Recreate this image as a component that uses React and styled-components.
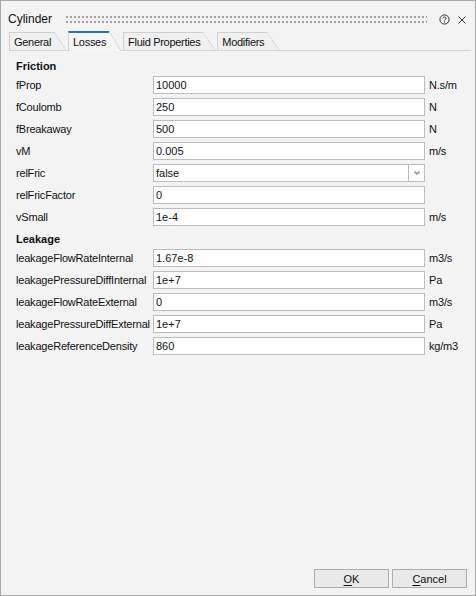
import React from "react";
import styled, { createGlobalStyle } from "styled-components";

const GlobalStyle = createGlobalStyle`
  html, body {
    margin: 0;
    padding: 0;
    background: #f3f3f3;
  }
  * {
    box-sizing: border-box;
  }
`;

const friction = [
  { label: "fProp", value: "10000", unit: "N.s/m" },
  { label: "fCoulomb", value: "250", unit: "N" },
  { label: "fBreakaway", value: "500", unit: "N" },
  { label: "vM", value: "0.005", unit: "m/s" },
  { label: "relFric", value: "false", select: true },
  { label: "relFricFactor", value: "0" },
  { label: "vSmall", value: "1e-4", unit: "m/s" },
];

const leakage = [
  { label: "leakageFlowRateInternal", value: "1.67e-8", unit: "m3/s" },
  { label: "leakagePressureDiffInternal", value: "1e+7", unit: "Pa" },
  { label: "leakageFlowRateExternal", value: "0", unit: "m3/s" },
  { label: "leakagePressureDiffExternal", value: "1e+7", unit: "Pa" },
  { label: "leakageReferenceDensity", value: "860", unit: "kg/m3" },
];

const tabs = ["General", "Losses", "Fluid Properties", "Modifiers"];

function renderRows(rows) {
  return rows.map((row) => (
    <Row key={row.label}>
      <Label>{row.label}</Label>
      {row.select ? (
        <Select>
          <SelectValue>{row.value}</SelectValue>
          <SelectButton>
            <svg width="8" height="6" viewBox="0 0 8 6">
              <path d="M1.5 1.5 L4 4 L6.5 1.5" stroke="#8a8a8a" strokeWidth="1.4" fill="none" />
            </svg>
          </SelectButton>
        </Select>
      ) : (
        <Field>{row.value}</Field>
      )}
      <Unit>{row.unit}</Unit>
    </Row>
  ));
}

const App = () => {
  return (
    <Window>
      <GlobalStyle />
      <TitleBar>
        <Title>Cylinder</Title>
        <Grip>
          <svg width="100%" height="7">
            <defs>
              <pattern id="grip" width="4" height="5" patternUnits="userSpaceOnUse">
                <rect x="0" y="0" width="2" height="2" fill="#a3a3a3" />
              </pattern>
            </defs>
            <rect x="0" y="0" width="100%" height="7" fill="url(#grip)" />
          </svg>
        </Grip>
        <TitleIcons>
          <svg width="11" height="11" viewBox="0 0 11 11">
            <circle cx="5.5" cy="5.5" r="4.6" stroke="#333" strokeWidth="1" fill="none" />
            <path d="M3.9 4.3 C3.9 2.6 7.1 2.6 7.1 4.3 C7.1 5.5 5.5 5.4 5.5 6.6" stroke="#333" strokeWidth="1" fill="none" />
            <rect x="5" y="7.4" width="1" height="1" fill="#333" />
          </svg>
          <svg width="10" height="10" viewBox="0 0 10 10">
            <path d="M1.5 1.5 L8.5 8.5 M8.5 1.5 L1.5 8.5" stroke="#333" strokeWidth="1" />
          </svg>
        </TitleIcons>
      </TitleBar>

      <TabStrip>
        {tabs.map((t) => (
          <Tab key={t} $active={t === "Losses"}>
            {t}
          </Tab>
        ))}
      </TabStrip>

      <Content>
        <SectionTitle>Friction</SectionTitle>
        {renderRows(friction)}
        <SectionTitle>Leakage</SectionTitle>
        {renderRows(leakage)}
      </Content>

      <Footer>
        <Button>
          <u>O</u>K
        </Button>
        <Button>
          <u>C</u>ancel
        </Button>
      </Footer>
    </Window>
  );
};

export default App;

const Window = styled.div`
  width: 476px;
  height: 596px;
  border: 1px solid #a9a9a9;
  background: #f3f3f3;
  display: flex;
  flex-direction: column;
  font-family: "Liberation Sans", Arial, sans-serif;
  color: #111;
`;

const TitleBar = styled.div`
  height: 30px;
  padding: 6px 8px 0 7px;
  display: flex;
  align-items: center;
`;

const Title = styled.div`
  font-size: 12px;
  width: 58px;
`;

const Grip = styled.div`
  flex: 1;
  height: 7px;
  display: flex;
  align-items: center;

  svg {
    display: block;
  }
`;

const TitleIcons = styled.div`
  display: flex;
  align-items: center;
  gap: 7px;
  margin-left: 12px;
  padding-top: 1px;
`;

const TabStrip = styled.div`
  height: 20px;
  margin: 0 4px 0 8px;
  display: flex;
  align-items: flex-end;
  border-bottom: 1px solid #d6d6d6;
`;

const Tab = styled.div`
  position: relative;
  height: ${(p) => (p.$active ? "20px" : "18px")};
  margin-bottom: ${(p) => (p.$active ? "-1px" : "0")};
  padding: 0 3px 0 4px;
  margin-right: 14px;
  display: flex;
  align-items: center;
  font-size: 11px;
  letter-spacing: -0.3px;
  background: ${(p) => (p.$active ? "#f5f5f5" : "#f0f0f0")};
  border-left: 1px solid #d0d0d0;
  border-top: ${(p) => (p.$active ? "2px solid #1f7ab4" : "1px solid #d0d0d0")};
  z-index: ${(p) => (p.$active ? 2 : 1)};

  &::after {
    content: "";
    position: absolute;
    top: ${(p) => (p.$active ? "-2px" : "-1px")};
    right: -12px;
    width: 12px;
    bottom: 0;
    background: linear-gradient(
      to top right,
      ${(p) => (p.$active ? "#f5f5f5" : "#f0f0f0")} calc(50% - 0.6px),
      #cfcfcf 50%,
      transparent calc(50% + 0.6px)
    );
  }
`;

const Content = styled.div`
  flex: 1;
  padding: 6px 0 0 15px;
  display: flex;
  flex-direction: column;
  gap: 4px;
`;

const SectionTitle = styled.div`
  height: 18px;
  margin-bottom: -3px;
  display: flex;
  align-items: center;
  font-size: 11px;
  font-weight: bold;
`;

const Row = styled.div`
  height: 18px;
  display: flex;
  align-items: center;
`;

const Label = styled.div`
  width: 137px;
  font-size: 11px;
  letter-spacing: -0.2px;
  white-space: nowrap;
`;

const Field = styled.div`
  width: 272px;
  height: 18px;
  border: 1px solid #bdbdbd;
  background: #fff;
  font-size: 11px;
  padding-left: 2px;
  display: flex;
  align-items: center;
`;

const Select = styled.div`
  width: 272px;
  height: 18px;
  display: flex;
  border: 1px solid #bdbdbd;
  background: #fff;
`;

const SelectValue = styled.div`
  flex: 1;
  font-size: 11px;
  padding-left: 2px;
  display: flex;
  align-items: center;
`;

const SelectButton = styled.div`
  width: 16px;
  border-left: 1px solid #bdbdbd;
  display: flex;
  align-items: center;
  justify-content: center;
`;

const Unit = styled.div`
  margin-left: 4px;
  font-size: 11px;
  letter-spacing: -0.2px;
`;

const Footer = styled.div`
  height: 40px;
  padding: 0 8px 7px 0;
  display: flex;
  justify-content: flex-end;
  align-items: flex-end;
  gap: 3px;
`;

const Button = styled.div`
  width: 75px;
  height: 19px;
  border: 1px solid #adadad;
  background: #e9e9e9;
  font-size: 11px;
  display: flex;
  align-items: center;
  justify-content: center;

  u {
    text-decoration-thickness: 1px;
    text-underline-offset: 2px;
  }
`;
